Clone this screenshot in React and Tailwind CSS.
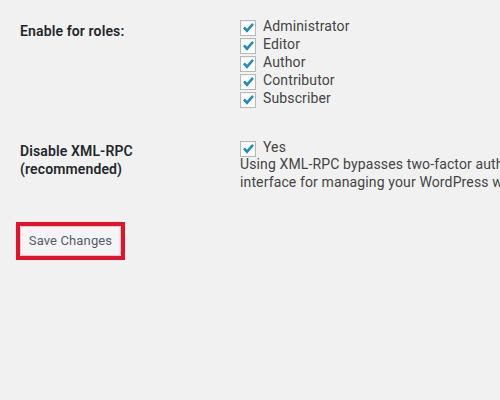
import React from "react";

function Check() {
  return (
    <span className="mt-[3px] mr-[7px] flex h-[16px] w-[16px] shrink-0 items-center justify-center border border-[#b4b9be] bg-white shadow-[inset_0_1px_2px_rgba(0,0,0,0.07)]">
      <svg width="14" height="14" viewBox="0 0 14 14">
        <path d="M2 7.3 L3.9 5.5 L6 7.8 L11.1 2 L12.9 3.8 L6 11.8 Z" fill="#1e8cbe" />
      </svg>
    </span>
  );
}

function Row({ children }) {
  return (
    <div className="flex h-[18px] items-start">
      <Check />
      <span className="leading-[18px] whitespace-nowrap">{children}</span>
    </div>
  );
}

export default function App() {
  const roles = ["Administrator", "Editor", "Author", "Contributor", "Subscriber"];
  return (
    <div
      className="h-[400px] w-[500px] overflow-hidden bg-[#f1f1f1] pl-[20px] text-[14px] tracking-[0.13px] text-[#444]"
      style={{ fontFamily: "Roboto, 'Liberation Sans', sans-serif" }}
    >
      <div className="flex">
        <div className="w-[220px] shrink-0 pt-[22px] font-semibold leading-[18px] text-[#23282d]">
          Enable for roles:
        </div>
        <div className="pt-[17px]">
          {roles.map((r) => (
            <Row key={r}>{r}</Row>
          ))}
        </div>
      </div>
      <div className="mt-[31px] flex">
        <div className="w-[220px] shrink-0 pt-[4px] font-semibold leading-[18px] text-[#23282d]">
          Disable XML-RPC
          <br />
          (recommended)
        </div>
        <div className="min-w-0">
          <Row>Yes</Row>
          <p className="mt-[-1px] whitespace-nowrap leading-[18px]">
            Using XML-RPC bypasses two-factor authentication. Only enable it if you use an external
            <br />
            interface for managing your WordPress website.
          </p>
        </div>
      </div>
      <div className="mt-[31px] ml-[-4px] inline-block border-[4px] border-[#e5102a]">
        <button className="block h-[30px] w-[101px] rounded-[2px] border border-[#ccc] bg-[#f4f4f7] text-[13px] leading-[28px] text-[#555d66]">
          Save Changes
        </button>
      </div>
    </div>
  );
}
